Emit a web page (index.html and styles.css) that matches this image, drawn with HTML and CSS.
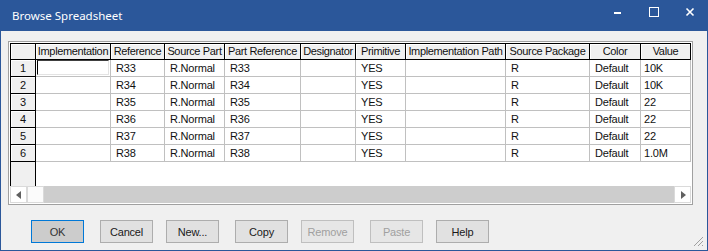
FILE: index.html
```html
<!DOCTYPE html>
<html lang="en">
<head>
    <meta charset="UTF-8">
    <title>Browse Spreadsheet</title>
    <link rel="stylesheet" href="styles.css">
</head>
<body>
<div class="window">
    <div class="titlebar">
        <span class="title">Browse Spreadsheet</span>
        <div class="caption">
            <span class="cap-btn">
                <svg width="10" height="10" viewBox="0 0 10 10"><rect x="1" y="5" width="7" height="2" fill="#fff"/></svg>
            </span>
            <span class="cap-btn">
                <svg width="10" height="10" viewBox="0 0 10 10"><rect x="0.5" y="0.5" width="9" height="9" fill="none" stroke="#fff"/></svg>
            </span>
            <span class="cap-btn">
                <svg width="10" height="10" viewBox="0 0 10 10"><path d="M1.5 1.5 L8.5 8.5 M8.5 1.5 L1.5 8.5" stroke="#fff" stroke-width="1.6"/></svg>
            </span>
        </div>
    </div>

    <div class="content">
        <div class="sheet">
            <div class="row head">
                <div class="corner"></div>
                <div class="hcell">Implementation</div>
                <div class="hcell">Reference</div>
                <div class="hcell">Source Part</div>
                <div class="hcell">Part Reference</div>
                <div class="hcell">Designator</div>
                <div class="hcell">Primitive</div>
                <div class="hcell">Implementation Path</div>
                <div class="hcell">Source Package</div>
                <div class="hcell">Color</div>
                <div class="hcell">Value</div>
            </div>
            <div class="row">
                <div class="rhead">1</div>
                <div class="cell"><div class="editor"></div></div>
                <div class="cell">R33</div>
                <div class="cell">R.Normal</div>
                <div class="cell">R33</div>
                <div class="cell"></div>
                <div class="cell">YES</div>
                <div class="cell"></div>
                <div class="cell">R</div>
                <div class="cell">Default</div>
                <div class="cell val">10K</div>
            </div>
            <div class="row">
                <div class="rhead">2</div>
                <div class="cell"></div>
                <div class="cell">R34</div>
                <div class="cell">R.Normal</div>
                <div class="cell">R34</div>
                <div class="cell"></div>
                <div class="cell">YES</div>
                <div class="cell"></div>
                <div class="cell">R</div>
                <div class="cell">Default</div>
                <div class="cell val">10K</div>
            </div>
            <div class="row">
                <div class="rhead">3</div>
                <div class="cell"></div>
                <div class="cell">R35</div>
                <div class="cell">R.Normal</div>
                <div class="cell">R35</div>
                <div class="cell"></div>
                <div class="cell">YES</div>
                <div class="cell"></div>
                <div class="cell">R</div>
                <div class="cell">Default</div>
                <div class="cell val">22</div>
            </div>
            <div class="row">
                <div class="rhead">4</div>
                <div class="cell"></div>
                <div class="cell">R36</div>
                <div class="cell">R.Normal</div>
                <div class="cell">R36</div>
                <div class="cell"></div>
                <div class="cell">YES</div>
                <div class="cell"></div>
                <div class="cell">R</div>
                <div class="cell">Default</div>
                <div class="cell val">22</div>
            </div>
            <div class="row">
                <div class="rhead">5</div>
                <div class="cell"></div>
                <div class="cell">R37</div>
                <div class="cell">R.Normal</div>
                <div class="cell">R37</div>
                <div class="cell"></div>
                <div class="cell">YES</div>
                <div class="cell"></div>
                <div class="cell">R</div>
                <div class="cell">Default</div>
                <div class="cell val">22</div>
            </div>
            <div class="row">
                <div class="rhead">6</div>
                <div class="cell"></div>
                <div class="cell">R38</div>
                <div class="cell">R.Normal</div>
                <div class="cell">R38</div>
                <div class="cell"></div>
                <div class="cell">YES</div>
                <div class="cell"></div>
                <div class="cell">R</div>
                <div class="cell">Default</div>
                <div class="cell val">1.0M</div>
            </div>
            <div class="row filler">
                <div class="rhead"></div>
                <div class="blank"></div>
            </div>
            <div class="hscroll">
                <span class="arrow"><svg width="8" height="8" viewBox="0 0 8 8"><path d="M6 0 L1 4 L6 8 Z" fill="#606060"/></svg></span>
                <span class="thumb"></span>
                <span class="track"></span>
                <span class="arrow"><svg width="8" height="8" viewBox="0 0 8 8"><path d="M2 0 L7 4 L2 8 Z" fill="#606060"/></svg></span>
            </div>
        </div>

        <div class="buttons">
            <button class="btn default">OK</button>
            <button class="btn">Cancel</button>
            <button class="btn">New...</button>
            <button class="btn">Copy</button>
            <button class="btn" disabled>Remove</button>
            <button class="btn" disabled>Paste</button>
            <button class="btn">Help</button>
        </div>
    </div>

    <svg class="grip" width="12" height="12" viewBox="0 0 12 12">
        <path d="M11 2 L2 11 M11 6 L6 11 M11 10 L10 11" stroke="#a0a0a0" stroke-width="1"/>
    </svg>
</div>
</body>
</html>
```

FILE: styles.css
```css
body {
    margin: 0;
    background-color: #f0f0f0;
    font-family: "Liberation Sans", Arial, sans-serif;
}

.window {
    position: relative;
    width: 708px;
    height: 251px;
    box-sizing: border-box;
    background-color: #f0f0f0;
    border: 1px solid #2b579a;
    border-top: none;
}

.titlebar {
    display: flex;
    align-items: center;
    height: 31px;
    margin: 0 -1px;
    background-color: #2b579a;
    color: #ffffff;
}

.title {
    padding-left: 12px;
    font-family: "Noto Sans", "Open Sans", sans-serif;
    font-size: 11.5px;
    padding-bottom: 1px;
}

.caption {
    display: flex;
    margin-left: auto;
    height: 100%;
}

.cap-btn {
    display: flex;
    align-items: center;
    justify-content: center;
    width: 36px;
    height: 24px;
}

.content {
    padding: 10px 0 0 7px;
}

.sheet {
    width: 685px;
    height: 164px;
    box-sizing: border-box;
    border: 1px solid #a0a0a0;
    background-color: #ffffff;
    padding: 1px;
}

.row {
    display: grid;
    grid-template-columns: 26px 75px 54px 60px 76px 55px 50px 100px 84px 51px 50px;
    height: 17px;
    font-size: 11px;
    letter-spacing: -0.2px;
    color: #111111;
}

.row > div {
    box-sizing: border-box;
    overflow: hidden;
    white-space: nowrap;
}

.corner,
.hcell,
.rhead {
    background-color: #f0f0f0;
    border-right: 1px solid #000000;
    border-bottom: 1px solid #000000;
    box-shadow: inset 1px 1px 0 #ffffff;
}

.corner,
.hcell {
    border-top: 1px solid #000000;
}

.corner,
.rhead {
    border-left: 1px solid #000000;
}

.hcell {
    text-align: center;
    line-height: 14px;
    letter-spacing: -0.35px;
}

.rhead {
    text-align: center;
    line-height: 16px;
}

.cell {
    border-right: 1px solid #c0c0c0;
    border-bottom: 1px solid #c0c0c0;
    padding-left: 5px;
    line-height: 17px;
}

.cell.val {
    padding-left: 3px;
}

.editor {
    margin: 0 1px 0 -4px;
    height: 15px;
    box-sizing: border-box;
    border-top: 1px solid #404040;
    border-left: 1px solid #000000;
    border-right: 1px solid #e3e3e3;
    border-bottom: 1px solid #e3e3e3;
    background-color: #ffffff;
}

.row.filler {
    height: 24px;
}

.row.filler .rhead {
    border-bottom: none;
    box-shadow: none;
}

.blank {
    grid-column: 2 / -1;
}

.hscroll {
    display: flex;
    height: 17px;
    width: 681px;
    background-color: #cdcdcd;
}

.arrow,
.thumb {
    display: flex;
    align-items: center;
    justify-content: center;
    width: 17px;
    height: 17px;
    box-sizing: border-box;
    background-color: #ffffff;
    border: 1px solid #dadada;
}

.thumb {
    background-color: #fbfbfb;
}

.track {
    flex: 1;
}

.buttons {
    display: flex;
    margin: 15px 0 0 23px;
}

.btn {
    width: 53px;
    height: 23px;
    margin-right: 13px;
    padding: 0;
    box-sizing: border-box;
    background-color: #e1e1e1;
    border: 1px solid #adadad;
    font-family: "Liberation Sans", Arial, sans-serif;
    font-size: 11px;
    letter-spacing: -0.2px;
    color: #1a1a1a;
}

.btn:nth-child(odd) {
    margin-right: 16px;
}

.btn.default {
    background-color: #cccccc;
    border-color: #0078d7;
    color: #333333;
}

.btn:disabled {
    background-color: #e6e6e6;
    border-color: #bfbfbf;
    color: #a0a0a0;
}

.grip {
    position: absolute;
    right: 3px;
    bottom: 3px;
}
```
